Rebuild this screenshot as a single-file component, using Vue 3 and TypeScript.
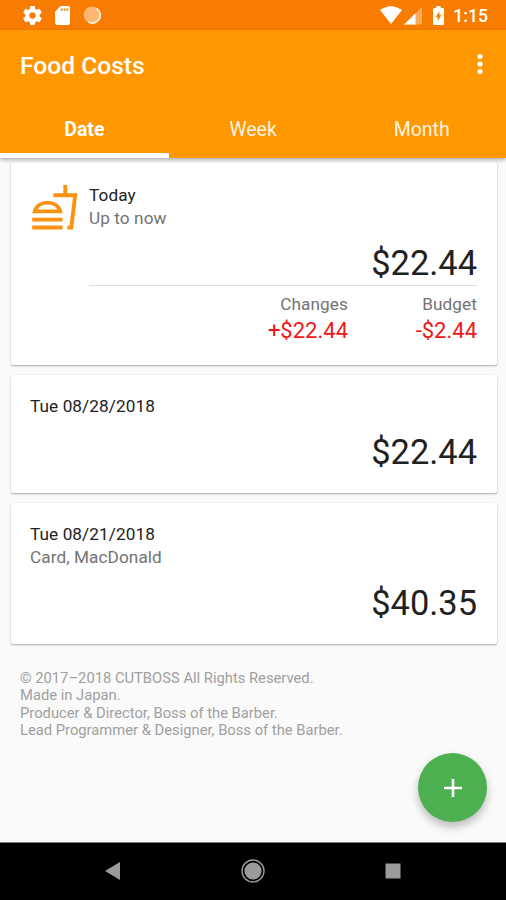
<script setup lang="ts">
import { ref } from 'vue'

interface Entry {
  date: string
  note?: string
  amount: string
}

const tabs: string[] = ['Date', 'Week', 'Month']
const active = ref(0)

const entries: Entry[] = [
  { date: 'Tue 08/28/2018', amount: '$22.44' },
  { date: 'Tue 08/21/2018', note: 'Card, MacDonald', amount: '$40.35' },
]

const credits: string[] = [
  '© 2017–2018 CUTBOSS All Rights Reserved.',
  'Made in Japan.',
  'Producer & Director, Boss of the Barber.',
  'Lead Programmer & Designer, Boss of the Barber.',
]
</script>

<template>
  <div class="screen">
    <div class="status">
      <svg class="gear" viewBox="2 2 20 20" width="19" height="19">
        <path fill="#fff" d="M19.43 12.98c.04-.32.07-.64.07-.98s-.03-.66-.07-.98l2.11-1.65c.19-.15.24-.42.12-.64l-2-3.46c-.12-.22-.39-.3-.61-.22l-2.49 1c-.52-.4-1.08-.73-1.69-.98l-.38-2.65C14.46 2.18 14.25 2 14 2h-4c-.25 0-.46.18-.49.42l-.38 2.65c-.61.25-1.17.59-1.69.98l-2.49-1c-.23-.09-.49 0-.61.22l-2 3.46c-.13.22-.07.49.12.64l2.11 1.65c-.04.32-.07.65-.07.98s.03.66.07.98l-2.11 1.65c-.19.15-.24.42-.12.64l2 3.46c.12.22.39.3.61.22l2.49-1c.52.4 1.08.73 1.69.98l.38 2.65c.03.24.24.42.49.42h4c.25 0 .46-.18.49-.42l.38-2.65c.61-.25 1.17-.59 1.69-.98l2.49 1c.23.09.49 0 .61-.22l2-3.46c.12-.22.07-.49-.12-.64l-2.11-1.65zM12 15.5c-1.93 0-3.5-1.57-3.5-3.5s1.57-3.5 3.5-3.5 3.5 1.57 3.5 3.5-1.57 3.5-3.5 3.5z" />
      </svg>
      <svg class="sd" viewBox="4 2 16 20" width="15" height="19" preserveAspectRatio="none">
        <path fill="#fff" d="M18 2h-8L4.02 8 4 20c0 1.1.9 2 2 2h12c1.1 0 2-.9 2-2V4c0-1.1-.9-2-2-2zm-6 5h-1.800V4.500h1.800v2.500zm3 0h-1.800V4.500h1.800v2.500zm3 0h-1.800V4.500h1.800v2.500z" />
      </svg>
      <svg class="dot" viewBox="0 0 18 18" width="18" height="18">
        <circle cx="9" cy="9" r="8.4" fill="#fbb772" />
        <path d="M13.600 2.400A7.800 7.800 0 0 1 5.200 15.800" fill="none" stroke="#fff0df" stroke-width="1.7" />
      </svg>
      <span class="grow"></span>
      <svg class="wifi" viewBox="0 0 22 18" width="22" height="18">
        <path fill="#fff" d="M0 4Q11-3.6 22 4L11 18Z" />
      </svg>
      <svg class="cell" viewBox="0 0 18 18" width="18" height="18">
        <path fill="#fff" opacity=".35" d="M18 0v17.5H0Z" />
        <path fill="#fff" d="M11.5 6.3v11.2H0Z" />
      </svg>
      <svg class="battery" viewBox="7 2 10 20" width="11" height="19" preserveAspectRatio="none">
        <path fill="#fff" d="M15.67 4H14V2h-4v2H8.33C7.6 4 7 4.6 7 5.33v15.33C7 21.4 7.6 22 8.33 22h7.33c.74 0 1.34-.6 1.34-1.33V5.33C17 4.6 16.4 4 15.67 4zM11.200 18V13.500H9.400l3.400-6V11.500h1.800l-3.400 6.500z" />
      </svg>
      <span class="clock">1:15</span>
    </div>

    <header class="appbar">
      <div class="toolbar">
        <h1>Food Costs</h1>
        <svg class="more" viewBox="0 0 6 22" width="6" height="22">
          <circle cx="3" cy="3.5" r="2.6" fill="#fff" />
          <circle cx="3" cy="11" r="2.6" fill="#fff" />
          <circle cx="3" cy="18.5" r="2.6" fill="#fff" />
        </svg>
      </div>
      <nav class="tabs">
        <button
          v-for="(tab, i) in tabs"
          :key="tab"
          class="tab"
          :class="{ active: active === i }"
          @click="active = i"
        >{{ tab }}</button>
      </nav>
    </header>

    <main class="content">
      <section class="card summary">
        <svg class="meal" viewBox="0 0 46 46" width="46" height="46">
          <g fill="none" stroke="#fb9210" stroke-width="3.9">
            <path d="M2.8 26.4C4.4 20.6 9.6 17.6 15.4 17.6S26.6 20.6 28.2 26.4Z" />
            <path d="M.2 34.6H30.5M.2 42.5H30.5" />
            <path d="M33.3 0V10M21.3 10.2H43.2L39.3 42.6H35.3" />
          </g>
        </svg>
        <div class="details">
          <div class="heading">Today</div>
          <div class="sub">Up to now</div>
          <div class="amount">$22.44</div>
          <div class="stats">
            <div class="stat">
              <div class="sub">Changes</div>
              <div class="delta">+$22.44</div>
            </div>
            <div class="stat">
              <div class="sub">Budget</div>
              <div class="delta">-$2.44</div>
            </div>
          </div>
        </div>
      </section>

      <section v-for="entry in entries" :key="entry.date" class="card">
        <div class="heading">{{ entry.date }}</div>
        <div v-if="entry.note" class="sub">{{ entry.note }}</div>
        <div class="amount">{{ entry.amount }}</div>
      </section>

      <footer class="credits">
        <div v-for="line in credits" :key="line">{{ line }}</div>
      </footer>

      <button class="fab" aria-label="Add">
        <svg viewBox="0 0 18 18" width="18" height="18">
          <path d="M9 0V18M0 9H18" stroke="#fff" stroke-width="2.6" />
        </svg>
      </button>
    </main>

    <div class="navbar">
      <svg viewBox="0 0 16 18" width="16" height="18"><path fill="#9b9b9b" d="M0 9 15 0V18Z" /></svg>
      <svg viewBox="0 0 24 24" width="24" height="24">
        <circle cx="12" cy="12" r="11" fill="none" stroke="#9b9b9b" stroke-width="1.4" />
        <circle cx="12" cy="12" r="8.6" fill="#9b9b9b" />
      </svg>
      <svg viewBox="0 0 16 16" width="16" height="16"><path fill="#9b9b9b" d="M.5.5h15v15H.5z" /></svg>
    </div>
  </div>
</template>

<style>
body {
  margin: 0;
}
</style>

<style scoped>
.screen {
  width: 506px;
  height: 900px;
  display: flex;
  flex-direction: column;
  overflow: hidden;
  background: #fafafa;
  font-family: Roboto, 'Liberation Sans', sans-serif;
  color: #212121;
}
button {
  font: inherit;
  border: 0;
  padding: 0;
  cursor: pointer;
}
svg {
  display: block;
  flex: none;
}
.status {
  height: 30px;
  flex: none;
  display: flex;
  align-items: center;
  padding: 0 18px 0 23px;
  background: #f77c00;
}
.sd {
  margin-left: 12.5px;
}
.dot {
  margin-left: 13px;
}
.grow {
  flex: 1;
}
.cell {
  margin: 2px 11px 0 2px;
}
.battery {
  margin-right: 9px;
}
.clock {
  font-size: 17.7px;
  font-weight: 500;
  color: #fff;
  line-height: 30px;
  padding-top: 2px;
}
.appbar {
  position: relative;
  z-index: 1;
  flex: none;
  height: 128px;
  background: #ff9800;
  color: #fff;
  box-shadow: 0 2px 4px rgba(0, 0, 0, 0.3);
}
.toolbar {
  height: 69px;
  display: flex;
  align-items: center;
  justify-content: space-between;
  padding: 0 23px 0 20px;
}
.more {
  margin-bottom: 1px;
}
h1 {
  margin: 2px 0 0;
  font-size: 24.6px;
  font-weight: 500;
  line-height: 30px;
}
.tabs {
  display: grid;
  grid-template-columns: repeat(3, 1fr);
  height: 59px;
}
.tab {
  background: none;
  color: #fff3e0;
  font-size: 19.5px;
  border-bottom: 5px solid transparent;
  padding-top: 7px;
}
.tab.active {
  color: #fff;
  font-weight: 700;
  border-bottom-color: #fff;
}
.content {
  position: relative;
  flex: 1;
  display: flex;
  flex-direction: column;
  gap: 10px;
  padding: 4px 9px 0 11px;
}
.card {
  background: #fff;
  border-radius: 2px;
  box-shadow: 0 1px 2px rgba(0, 0, 0, 0.32), 0 0 1px rgba(0, 0, 0, 0.1);
  padding: 20.5px 20px 21px 19px;
}
.heading,
.sub {
  font-size: 17.2px;
  line-height: 23px;
  letter-spacing: 0.08px;
}
.sub {
  color: #737373;
}
.amount {
  font-size: 34.4px;
  line-height: 40px;
  text-align: right;
  margin-top: 13.5px;
}
.summary {
  display: flex;
  padding-top: 22px;
  padding-bottom: 18.5px;
}
.summary .amount {
  margin: 13px 0 2px;
}
.meal {
  margin: 1px 11px 0 2px;
}
.details {
  flex: 1;
}
.stats {
  display: flex;
  justify-content: flex-end;
  border-top: 1px solid #dedede;
  padding-top: 7px;
}
.stat {
  width: 129px;
  text-align: right;
}
.delta {
  font-size: 22px;
  line-height: 30px;
  color: #f01616;
}
.credits {
  padding: 16.5px 9px;
  font-size: 14.75px;
  line-height: 17.3px;
  color: #a0a0a0;
}
.fab {
  position: absolute;
  right: 19px;
  bottom: 20px;
  width: 69px;
  height: 69px;
  border-radius: 50%;
  background: #4caf50;
  display: flex;
  align-items: center;
  justify-content: center;
  box-shadow: 0 5px 9px rgba(0, 0, 0, 0.25);
}
.navbar {
  height: 58px;
  flex: none;
  box-sizing: border-box;
  border-top: 1px solid #777;
  display: flex;
  align-items: center;
  justify-content: space-between;
  padding: 0 105px 2px;
  background: #000;
}
</style>
